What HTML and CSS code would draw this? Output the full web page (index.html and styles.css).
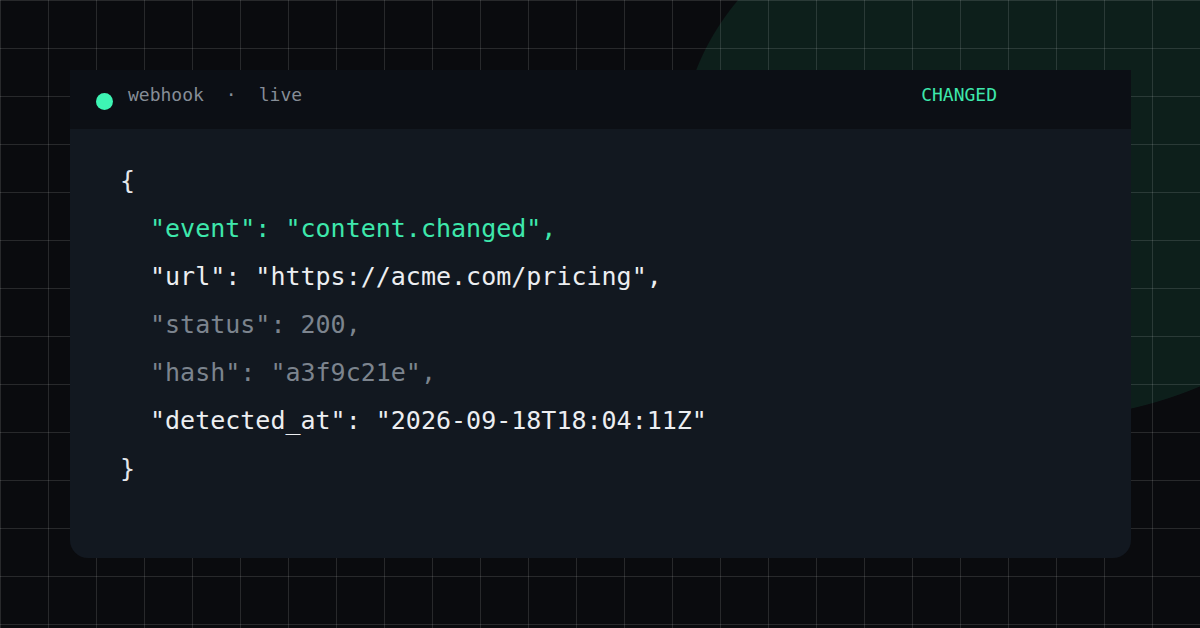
FILE: index.html
```html
<!DOCTYPE html>
<html>
<head>
<meta charset="utf-8">
<link rel="stylesheet" href="styles.css">
</head>
<body>
<main class="page">
  <section class="card">
    <header class="card-head">
      <span class="dot"></span>
      <span class="meta">webhook</span>
      <span class="meta">·</span>
      <span class="meta">live</span>
      <span class="badge">CHANGED</span>
    </header>
    <pre class="code"><span class="line">{</span>
<span class="line ind accent">"event": "content.changed",</span>
<span class="line ind bright">"url": "https://acme.com/pricing",</span>
<span class="line ind muted">"status": 200,</span>
<span class="line ind muted">"hash": "a3f9c21e",</span>
<span class="line ind bright">"detected_at": "2026-09-18T18:04:11Z"</span>
<span class="line">}</span></pre>
  </section>
</main>
</body>
</html>
```
FILE: styles.css
```css
* { box-sizing: border-box; }
html, body {
  margin: 0;
  width: 1200px;
  height: 628px;
  overflow: hidden;
  font-family: "DejaVu Sans Mono", monospace;
}
body {
  background-color: #0a0b0e;
  background-image:
    linear-gradient(to right, rgba(255,255,255,0.12) 1px, transparent 1px),
    linear-gradient(to bottom, rgba(255,255,255,0.12) 1px, transparent 1px),
    radial-gradient(ellipse 351px 272px at 1032px 148px, #0d1f1b 99.7%, transparent 100%);
  background-size: 48px 48px, 48px 48px, 100% 100%;
  background-repeat: repeat, repeat, no-repeat;
}

.page {
  padding: 70px 69px 70px 70px;
  height: 628px;
}

.card {
  height: 488px;
  background: #121820;
  border-radius: 0 0 18px 18px;
  display: flex;
  flex-direction: column;
}

.card-head {
  height: 59px;
  background: #0c0f15;
  display: flex;
  align-items: center;
  padding: 0 134px 0 26px;
  font-size: 18px;
  color: #868d97;
}

.dot {
  width: 17px;
  height: 17px;
  border-radius: 50%;
  background: #3ef5b4;
  margin-top: 3px;
  margin-right: 15px;
}

.meta { margin-right: 22px; margin-top: -10px; }

.badge {
  margin-left: auto;
  color: #3ee8ac;
  margin-top: -11px;
}

.code {
  margin: 0;
  padding: 28px 0 0 50px;
  font-family: "DejaVu Sans Mono", monospace;
  font-size: 25px;
  line-height: 48px;
  color: #e4e7eb;
}

.ind { padding-left: 30px; }
.accent { color: #3ee8ac; }
.bright { color: #eceef1; }
.muted { color: #7c848e; }
```
